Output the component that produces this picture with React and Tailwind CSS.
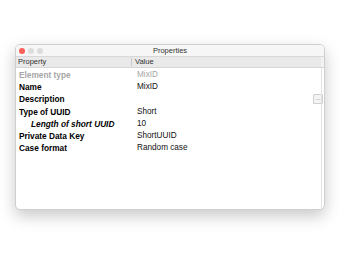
import React from 'react';

const rows = [
    { label: 'Element type', value: 'MixID', muted: true },
    { label: 'Name', value: 'MixID' },
    { label: 'Description', value: '', button: true },
    { label: 'Type of UUID', value: 'Short' },
    { label: 'Length of short UUID', value: '10', child: true },
    { label: 'Private Data Key', value: 'ShortUUID' },
    { label: 'Case format', value: 'Random case' },
];

const App = () => {
    return (
        <div className="w-[340px] h-[260px] bg-white pt-[44px] pl-[15px]" style={{ fontFamily: '"Liberation Sans", Arial, sans-serif' }}>
            {/* Window */}
            <div className="w-[310px] h-[166px] bg-white rounded-[5px] border border-[#cfcfcf] shadow-[0_6px_16px_rgba(0,0,0,0.22)] overflow-hidden flex flex-col">
                {/* Title bar */}
                <div className="relative h-[12px] bg-[#f6f6f6] border-b border-[#d8d8d8] flex items-center justify-center">
                    <div className="absolute left-[3px] top-[3px] flex gap-[3px]">
                        <span className="w-[6px] h-[6px] rounded-full bg-[#fc5f57]"></span>
                        <span className="w-[6px] h-[6px] rounded-full bg-[#dcdcdc]"></span>
                        <span className="w-[6px] h-[6px] rounded-full bg-[#dcdcdc]"></span>
                    </div>
                    <span className="text-[7.5px] leading-none text-[#333]">Properties</span>
                </div>

                <div className="flex flex-1">
                    <div className="flex-1 flex flex-col">
                        {/* Header */}
                        <div className="h-[11px] bg-[#e9e9e9] border-b border-[#d6d6d6] flex items-center text-[7.5px] leading-none text-[#333]">
                            <div className="w-[116px] pl-[2px] border-r border-[#c8c8c8] h-[8px] flex items-center">Property</div>
                            <div className="pl-[3px]">Value</div>
                        </div>

                        {/* Rows */}
                        <div className="flex flex-col pt-[1px]">
                            {rows.map((r) => (
                                <div key={r.label} className="h-[12.2px] flex items-center leading-none">
                                    <div
                                        className={`w-[117px] text-[8.3px] font-bold ${r.child ? 'pl-[15px] italic' : 'pl-[3px]'} ${r.muted ? 'text-[#a6a6a6]' : 'text-black'}`}
                                    >
                                        {r.label}
                                    </div>
                                    <div className={`pl-[4px] flex-1 flex items-center text-[8.2px] ${r.muted ? 'text-[#a6a6a6]' : 'text-[#111]'}`}>
                                        <span className="flex-1">{r.value}</span>
                                        {r.button && (
                                            <span className="w-[10px] h-[10px] -mt-[1px] -mr-[2px] border border-[#cfcfcf] bg-[#f4f4f4] rounded-[1px] flex items-center justify-center text-[6px] text-[#777] leading-none pb-[2px]">
                                                ...
                                            </span>
                                        )}
                                    </div>
                                </div>
                            ))}
                        </div>
                    </div>

                    {/* Right gutter */}
                    <div className="w-[3px] flex flex-col">
                        <div className="h-[11px] bg-[#f2f2f2] border-b border-[#d6d6d6]"></div>
                        <div className="flex-1 border-l border-[#e2e2e2]"></div>
                    </div>
                </div>
            </div>
        </div>
    );
};

export default App;
